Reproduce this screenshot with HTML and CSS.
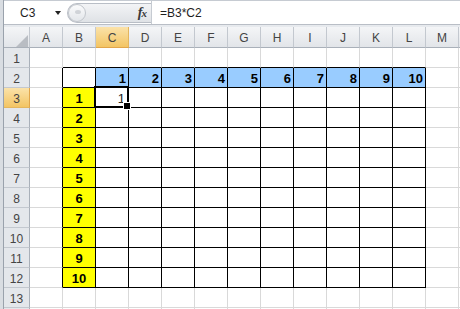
FILE: index.html
```html
<!DOCTYPE html>
<html>
<head>
<meta charset="utf-8">
<link rel="stylesheet" href="styles.css">
</head>
<body>
<div class="app">
  <div class="main">
    <div class="fbar">
      <div class="namebox"><span class="ref">C3</span><span class="arrow"></span></div>
      <div class="pill"><span class="knob"><span class="dot"></span></span><span class="fx">f<span class="x">x</span></span></div>
      <div class="formula">=B3*C2</div>
    </div>
    <div class="sheet">
      <div class="r hdr">
        <div class="corner"><svg width="12" height="12" viewBox="0 0 12 12"><polygon points="12,0 12,12 0,12" fill="#b9bdc3"/></svg></div>
        <div class="ch">A</div><div class="ch">B</div><div class="ch sel">C</div><div class="ch">D</div><div class="ch">E</div><div class="ch">F</div><div class="ch">G</div><div class="ch">H</div><div class="ch">I</div><div class="ch">J</div><div class="ch">K</div><div class="ch">L</div><div class="ch">M</div><div class="chf"></div>
      </div>
      <div class="r">
        <div class="rh">1</div>
        <div class="c"></div><div class="c bt"></div><div class="c bt"></div><div class="c bt"></div><div class="c bt"></div><div class="c bt"></div><div class="c bt"></div><div class="c bt"></div><div class="c bt"></div><div class="c bt"></div><div class="c bt"></div><div class="c bt"></div><div class="c"></div><div class="cf"></div>
      </div>
      <div class="r">
        <div class="rh">2</div>
        <div class="c bl"></div><div class="c k"></div><div class="c k blue">1</div><div class="c k blue">2</div><div class="c k blue">3</div><div class="c k blue">4</div><div class="c k blue">5</div><div class="c k blue">6</div><div class="c k blue">7</div><div class="c k blue">8</div><div class="c k blue">9</div><div class="c k blue">10</div><div class="c"></div><div class="cf"></div>
      </div>
      <div class="r">
        <div class="rh sel">3</div>
        <div class="c bl"></div><div class="c k yel">1</div><div class="c k act">1</div><div class="c k"></div><div class="c k"></div><div class="c k"></div><div class="c k"></div><div class="c k"></div><div class="c k"></div><div class="c k"></div><div class="c k"></div><div class="c k"></div><div class="c"></div><div class="cf"></div>
      </div>
      <div class="r">
        <div class="rh">4</div>
        <div class="c bl"></div><div class="c k yel">2</div><div class="c k"></div><div class="c k"></div><div class="c k"></div><div class="c k"></div><div class="c k"></div><div class="c k"></div><div class="c k"></div><div class="c k"></div><div class="c k"></div><div class="c k"></div><div class="c"></div><div class="cf"></div>
      </div>
      <div class="r">
        <div class="rh">5</div>
        <div class="c bl"></div><div class="c k yel">3</div><div class="c k"></div><div class="c k"></div><div class="c k"></div><div class="c k"></div><div class="c k"></div><div class="c k"></div><div class="c k"></div><div class="c k"></div><div class="c k"></div><div class="c k"></div><div class="c"></div><div class="cf"></div>
      </div>
      <div class="r">
        <div class="rh">6</div>
        <div class="c bl"></div><div class="c k yel">4</div><div class="c k"></div><div class="c k"></div><div class="c k"></div><div class="c k"></div><div class="c k"></div><div class="c k"></div><div class="c k"></div><div class="c k"></div><div class="c k"></div><div class="c k"></div><div class="c"></div><div class="cf"></div>
      </div>
      <div class="r">
        <div class="rh">7</div>
        <div class="c bl"></div><div class="c k yel">5</div><div class="c k"></div><div class="c k"></div><div class="c k"></div><div class="c k"></div><div class="c k"></div><div class="c k"></div><div class="c k"></div><div class="c k"></div><div class="c k"></div><div class="c k"></div><div class="c"></div><div class="cf"></div>
      </div>
      <div class="r">
        <div class="rh">8</div>
        <div class="c bl"></div><div class="c k yel">6</div><div class="c k"></div><div class="c k"></div><div class="c k"></div><div class="c k"></div><div class="c k"></div><div class="c k"></div><div class="c k"></div><div class="c k"></div><div class="c k"></div><div class="c k"></div><div class="c"></div><div class="cf"></div>
      </div>
      <div class="r">
        <div class="rh">9</div>
        <div class="c bl"></div><div class="c k yel">7</div><div class="c k"></div><div class="c k"></div><div class="c k"></div><div class="c k"></div><div class="c k"></div><div class="c k"></div><div class="c k"></div><div class="c k"></div><div class="c k"></div><div class="c k"></div><div class="c"></div><div class="cf"></div>
      </div>
      <div class="r">
        <div class="rh">10</div>
        <div class="c bl"></div><div class="c k yel">8</div><div class="c k"></div><div class="c k"></div><div class="c k"></div><div class="c k"></div><div class="c k"></div><div class="c k"></div><div class="c k"></div><div class="c k"></div><div class="c k"></div><div class="c k"></div><div class="c"></div><div class="cf"></div>
      </div>
      <div class="r">
        <div class="rh">11</div>
        <div class="c bl"></div><div class="c k yel">9</div><div class="c k"></div><div class="c k"></div><div class="c k"></div><div class="c k"></div><div class="c k"></div><div class="c k"></div><div class="c k"></div><div class="c k"></div><div class="c k"></div><div class="c k"></div><div class="c"></div><div class="cf"></div>
      </div>
      <div class="r">
        <div class="rh">12</div>
        <div class="c bl"></div><div class="c k yel">10</div><div class="c k"></div><div class="c k"></div><div class="c k"></div><div class="c k"></div><div class="c k"></div><div class="c k"></div><div class="c k"></div><div class="c k"></div><div class="c k"></div><div class="c k"></div><div class="c"></div><div class="cf"></div>
      </div>
      <div class="r">
        <div class="rh">13</div>
        <div class="c"></div><div class="c"></div><div class="c"></div><div class="c"></div><div class="c"></div><div class="c"></div><div class="c"></div><div class="c"></div><div class="c"></div><div class="c"></div><div class="c"></div><div class="c"></div><div class="c"></div><div class="cf"></div>
      </div>
      <div class="r">
        <div class="rh"></div>
        <div class="c"></div><div class="c"></div><div class="c"></div><div class="c"></div><div class="c"></div><div class="c"></div><div class="c"></div><div class="c"></div><div class="c"></div><div class="c"></div><div class="c"></div><div class="c"></div><div class="c"></div><div class="cf"></div>
      </div>
    </div>
  </div>
</div>
</body>
</html>
```

FILE: styles.css
```css
* { box-sizing: border-box; margin: 0; padding: 0; }
html, body { width: 460px; height: 309px; overflow: hidden; }
body {
  background: #e7eaee;
  font-family: "Liberation Sans", Arial, sans-serif;
}
.app {
  height: 309px;
  padding-left: 3px;
  background: #d9dde2;
}
.main {
  height: 309px;
  border-left: 1px solid #9aa2ac;
  background: #e7eaee;
  overflow: hidden;
}

/* formula bar */
.fbar {
  height: 25px;
  display: flex;
  align-items: center;
  background: #fff;
  border-top: 1px solid #c6cbd2;
  border-bottom: 1px solid #b9bec6;
}
.namebox {
  width: 63px;
  height: 100%;
  display: flex;
  align-items: center;
  position: relative;
  padding-left: 16px;
  font-size: 12px;
  color: #1e1e1e;
}
.arrow {
  position: absolute;
  left: 51px;
  top: 10px;
  width: 0;
  height: 0;
  border-left: 3.5px solid transparent;
  border-right: 3.5px solid transparent;
  border-top: 4px solid #222;
}
.pill {
  width: 84px;
  height: 20px;
  border: 1px solid #b9bec6;
  border-radius: 10px 0 0 10px;
  border-right: none;
  background: linear-gradient(#f3f4f6, #dfe2e6);
  display: flex;
  align-items: center;
  justify-content: space-between;
  padding-right: 5px;
}
.knob {
  width: 18px;
  height: 18px;
  border-radius: 50%;
  border: 1px solid #c2c6cc;
  background: linear-gradient(#fbfbfc, #e3e6ea);
  position: relative;
}
.dot {
  position: absolute;
  left: 6px;
  top: 5px;
  width: 6px;
  height: 4px;
  border-radius: 50%;
  background: #d0d3d8;
}
.fx {
  font-family: "Liberation Serif", "Times New Roman", serif;
  font-style: italic;
  font-weight: bold;
  font-size: 14px;
  color: #3a3a3a;
  letter-spacing: -1px;
}
.fx .x { font-size: 11px; }
.formula {
  flex: 1;
  height: 100%;
  border-left: 1px solid #c6cbd2;
  display: flex;
  align-items: center;
  padding-left: 8px;
  font-size: 12px;
  color: #1e1e1e;
}

/* sheet */
.sheet { margin-top: 2px; }
.r { display: flex; height: 20px; }
.r.hdr { height: 21px; }

.corner, .ch, .chf {
  height: 21px;
  background: linear-gradient(#f4f5f7, #e2e5e9);
  border-bottom: 1px solid #a9b0b9;
}
.corner {
  width: 26px;
  border-right: 1px solid #c3c8cf;
  display: flex;
  align-items: flex-end;
  justify-content: flex-end;
  padding-right: 1px;
}
.corner svg { display: block; }
.ch {
  width: 33px;
  border-right: 1px solid #c3c8cf;
  display: flex;
  align-items: center;
  justify-content: center;
  padding-top: 2px;
  font-size: 12px;
  color: #444;
}
.chf { flex: 1; }
.ch.sel {
  background: linear-gradient(#fbe2a9, #f3c564);
  border-bottom-color: #e1a54b;
  border-right-color: #e4b65e;
}

.rh {
  width: 26px;
  height: 20px;
  background: #e4e7eb;
  border-right: 1px solid #a9b0b9;
  border-bottom: 1px solid #c3c8cf;
  display: flex;
  align-items: center;
  justify-content: center;
  padding-top: 2px;
  font-size: 12px;
  color: #444;
}
.rh.sel {
  background: linear-gradient(#fbe2a9, #f3c564);
  border-right-color: #e1a54b;
  border-bottom-color: #e4b65e;
}

.c {
  width: 33px;
  height: 20px;
  background: #fff;
  border-right: 1px solid #d9d9d9;
  border-bottom: 1px solid #d9d9d9;
  display: flex;
  align-items: center;
  justify-content: flex-end;
  padding-right: 2px;
  padding-top: 1px;
  font-size: 13px;
  font-weight: bold;
  color: #000;
}
.cf {
  flex: 1;
  height: 20px;
  background: #fff;
  border-bottom: 1px solid #d9d9d9;
}
.c.bt { border-bottom-color: #000; }
.c.bl { border-right-color: #000; }
.c.k { border-right-color: #000; border-bottom-color: #000; }
.c.blue { background: #99ccff; }
.c.yel { background: #ffff00; justify-content: center; padding-right: 0; }
.c.act {
  position: relative;
  font-weight: normal;
  padding-right: 3px;
  color: #222;
}
.c.act::after {
  content: "";
  position: absolute;
  left: -2px;
  top: -2px;
  right: -1px;
  bottom: -1px;
  border: 2px solid #000;
  box-shadow: inset 0 0 0 1px #fff;
}
.c.act::before {
  content: "";
  position: absolute;
  right: -3px;
  bottom: -3px;
  width: 6px;
  height: 6px;
  background: #000;
  border: 1px solid #fff;
  z-index: 2;
}
```
